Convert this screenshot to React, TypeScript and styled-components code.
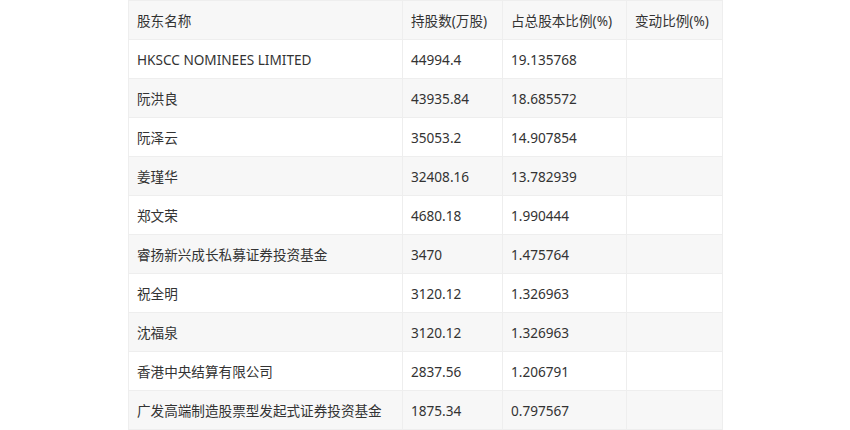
import React from "react";
import styled, { createGlobalStyle } from "styled-components";

const Global = createGlobalStyle`
  body { margin: 0; background: #fff; font-family: "Noto Sans", "Noto Sans CJK SC", sans-serif; }
`;
const Wrap = styled.div`
  display: flex;
  justify-content: flex-start;
  padding-left: 128px;
`;
const Table = styled.table`
  border-collapse: collapse;
  width: 594px;
  table-layout: fixed;
  font-size: 13.6px;
  color: #333;
`;
const Row = styled.tr<{ $gray: boolean }>`
  background: ${(p) => (p.$gray ? "#f7f7f7" : "#fff")};
  height: 39px;
`;
const Cell = styled.td`
  border: 1px solid #eeeeee;
  padding: 0 8px;
  white-space: nowrap;
  overflow: hidden;
`;

const header = ["股东名称", "持股数(万股)", "占总股本比例(%)", "变动比例(%)"];
const rows = [
  ["HKSCC NOMINEES LIMITED", "44994.4", "19.135768"],
  ["阮洪良", "43935.84", "18.685572"],
  ["阮泽云", "35053.2", "14.907854"],
  ["姜瑾华", "32408.16", "13.782939"],
  ["郑文荣", "4680.18", "1.990444"],
  ["睿扬新兴成长私募证券投资基金", "3470", "1.475764"],
  ["祝全明", "3120.12", "1.326963"],
  ["沈福泉", "3120.12", "1.326963"],
  ["香港中央结算有限公司", "2837.56", "1.206791"],
  ["广发高端制造股票型发起式证券投资基金", "1875.34", "0.797567"],
];

export default function App() {
  return (
    <>
      <Global />
      <Wrap>
        <Table>
          <colgroup>
            <col style={{ width: 274 }} />
            <col style={{ width: 100 }} />
            <col style={{ width: 124 }} />
            <col style={{ width: 96 }} />
          </colgroup>
          <tbody>
            <Row $gray>
              {header.map((h) => (
                <Cell key={h}>{h}</Cell>
              ))}
            </Row>
            {rows.map((r, i) => (
              <Row key={i} $gray={i % 2 === 1}>
                <Cell>{r[0]}</Cell>
                <Cell>{r[1]}</Cell>
                <Cell>{r[2]}</Cell>
                <Cell></Cell>
              </Row>
            ))}
          </tbody>
        </Table>
      </Wrap>
    </>
  );
}
